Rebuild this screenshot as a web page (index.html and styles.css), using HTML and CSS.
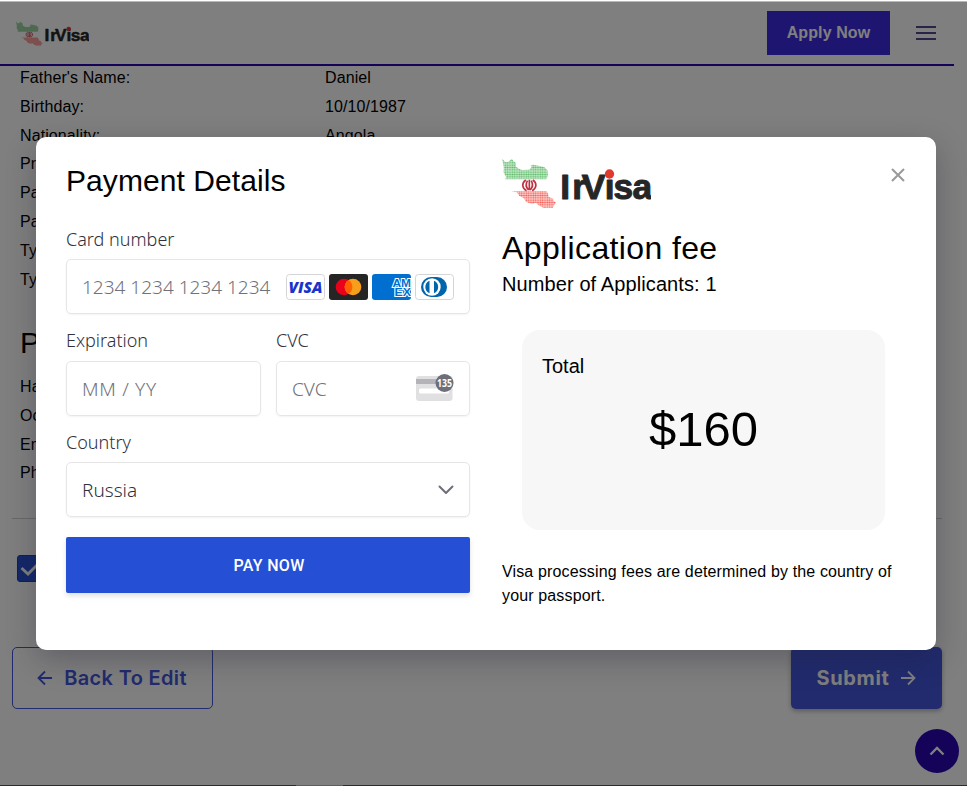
FILE: index.html
```
<!DOCTYPE html>
<html lang="en">
<head>
<meta charset="utf-8">
<title>IrVisa - Payment</title>
<link rel="stylesheet" href="styles.css">
</head>
<body>
<svg width="0" height="0" class="defs" aria-hidden="true">
  <defs>
    <pattern id="green-dots" width="7" height="7" patternUnits="userSpaceOnUse"><rect width="7" height="7" fill="#c5e8c8"/><circle cx="3.500" cy="3.500" r="2.600" fill="#5db868"/></pattern>
    <pattern id="red-dots" width="7" height="7" patternUnits="userSpaceOnUse"><rect width="7" height="7" fill="#ffd0cc"/><circle cx="3.500" cy="3.500" r="2.600" fill="#f4574f"/></pattern>
    <symbol id="logo" viewBox="36 38 446 150">
      <path fill="url(#green-dots)" d="M36 40l9 10 8 0 8-6 4-4 4 7 8 5 0 12 10 6 8 4 22-1 7-7-1-7 8-1 20 5 12 3 9 9 1 15-4 12H45l3-7-8-14 1-14z"/>
      <path fill="url(#red-dots)" d="M63 137h106l5 9 1 8 14 6 1 7 8 5-6 6-4 10-14-1-13 1-16-8-8-8-10 3-12-3-8-3-6-10-14-8-7-10z"/>
      <g fill="none" stroke="#c03242" stroke-width="5"><path d="M107 104c-13 9-12 24 2 32M128 104c13 9 12 24-2 32M112 106c-6 10-5 20 3 28M123 106c6 10 5 20-3 28M117.500 103v32"/></g>
      <text class="logo-text" font-size="106" y="161" x="210 246 275 344 370 427">IrVisa</text>
      <circle cx="358" cy="86" r="14" fill="#e03a2e"/>
    </symbol>
  </defs>
</svg>

<div class="page">
  <header class="topbar">
    <svg class="topbar-logo" role="img" aria-label="IrVisa"><use href="#logo"/></svg>
    <button class="apply">Apply Now</button>
    <div class="burger"><i></i><i></i><i></i></div>
  </header>
  <main>
    <dl class="facts">
      <dt>Father's Name:</dt><dd>Daniel</dd>
      <dt>Birthday:</dt><dd>10/10/1987</dd>
      <dt>Nationality:</dt><dd>Angola</dd>
      <dt>Pr</dt><dd></dd>
      <dt>Pa</dt><dd></dd>
      <dt>Pa</dt><dd></dd>
      <dt>Ty</dt><dd></dd>
      <dt>Ty</dt><dd></dd>
    </dl>
    <h2>P</h2>
    <dl class="facts second">
      <dt>Ha</dt><dd></dd>
      <dt>Oc</dt><dd></dd>
      <dt>Em</dt><dd></dd>
      <dt>Ph</dt><dd></dd>
    </dl>
    <hr>
    <div class="check"><svg viewBox="0 0 26 26" width="26" height="26"><path d="M3.500 12l6.500 6L21 7" fill="none" stroke="#fff" stroke-width="2.800"/></svg></div>
    <div class="actions">
      <button class="back"><svg width="16" height="16" viewBox="0 0 16 16"><path d="M15 8H2M8 1.500L1.500 8 8 14.500"/></svg>Back To Edit</button>
      <button class="submit">Submit<svg width="16" height="16" viewBox="0 0 16 16"><path d="M1 8h13M8 1.500L14.500 8 8 14.500"/></svg></button>
    </div>
  </main>
  <div class="to-top"><svg width="16" height="10" viewBox="0 0 16 10"><path d="M1.500 8.500L8 2l6.500 6.500"/></svg></div>
  <div class="bottom-line"></div>
</div>

<div class="overlay">
  <div class="dialog">
    <section class="pay">
      <h1>Payment Details</h1>
      <label>Card number</label>
      <div class="field number">
        <span class="hint">1234 1234 1234 1234</span>
        <div class="cards">
          <svg viewBox="0 0 39 26"><rect x=".5" y=".5" width="38" height="25" rx="3" fill="#fff" stroke="#d5d5d8"/><text x="2.500" y="18.500" class="visa" textLength="34" lengthAdjust="spacingAndGlyphs">VISA</text></svg>
          <svg viewBox="0 0 39 26"><rect width="39" height="26" rx="3" fill="#252525"/><circle cx="15" cy="13" r="8.300" fill="#eb001b"/><circle cx="24" cy="13" r="8.300" fill="#f79e1b"/><path d="M19.500 6a8.300 8.300 0 0 1 0 14 8.300 8.300 0 0 1 0-14z" fill="#ff5f00"/></svg>
          <svg viewBox="0 0 39 26"><rect width="39" height="26" rx="3" fill="#016fd0"/><g class="amex"><text x="20.500" y="12.500" textLength="18.500" lengthAdjust="spacingAndGlyphs">AM</text><text x="22.500" y="21.500" textLength="16.500" lengthAdjust="spacingAndGlyphs">EX</text></g></svg>
          <svg viewBox="0 0 39 26"><rect x=".5" y=".5" width="38" height="25" rx="3" fill="#fff" stroke="#d5d5d8"/><path d="M16 3h6a10 10 0 0 1 0 20h-6a10 10 0 0 1 0-20z" fill="#0165ac"/><circle cx="17" cy="13" r="8.700" fill="#fff"/><path d="M14.500 6.800a6.700 6.700 0 0 0 0 12.400zM19 6.800a6.700 6.700 0 0 1 0 12.400z" fill="#0165ac"/></svg>
        </div>
      </div>
      <div class="pair">
        <div>
          <label>Expiration</label>
          <div class="field"><span class="hint expiry">MM / YY</span></div>
        </div>
        <div>
          <label>CVC</label>
          <div class="field"><span class="hint">CVC</span>
            <svg class="cvc" width="38" height="28" viewBox="0 0 38 28"><rect y="2" width="36.500" height="25" rx="3" fill="#e0e0e3"/><rect y="5" width="36.500" height="5" fill="#b3b3b8"/><rect x="3" y="14.500" width="30" height="5" rx="1.500" fill="#fff"/><circle cx="28.500" cy="9" r="9" fill="#6d6e78"/><text x="21" y="13" textLength="15" lengthAdjust="spacingAndGlyphs">135</text></svg>
          </div>
        </div>
      </div>
      <label>Country</label>
      <div class="field country"><span>Russia</span><svg width="16" height="10" viewBox="0 0 16 10"><path d="M1.500 1.500L8 8l6.500-6.500" fill="none" stroke="#6d6e78" stroke-width="2" stroke-linecap="round" stroke-linejoin="round"/></svg></div>
      <button class="pay-now">PAY NOW</button>
    </section>
    <section class="fee">
      <svg class="fee-logo" role="img" aria-label="IrVisa"><use href="#logo"/></svg>
      <h1>Application fee</h1>
      <p class="applicants">Number of Applicants: 1</p>
      <div class="total"><span>Total</span><strong>$160</strong></div>
      <p class="note">Visa processing fees are determined by the country of your passport.</p>
    </section>
    <svg class="close" width="14" height="14" viewBox="0 0 14 14"><path d="M1 1l12 12M13 1L1 13" stroke="#999" stroke-width="2" fill="none"/></svg>
  </div>
</div>
</body>
</html>
```
FILE: styles.css
```
* { box-sizing: border-box; }
body {
  margin: 0;
  height: 786px;
  overflow: hidden;
  background: #fff;
  font-family: "Liberation Sans", Arial, sans-serif;
  font-size: 16px;
  color: #000;
}
h1, h2, p, dl, dd { margin: 0; font-weight: 400; }
button { border: 0; padding: 0; font-family: inherit; }
.defs { position: absolute; }
.logo-text { font-family: "Liberation Sans", sans-serif; font-weight: 700; fill: #262626; stroke: #262626; stroke-width: 3; stroke-linejoin: round; }

.page { position: relative; height: 786px; }
.topbar {
  display: flex;
  align-items: center;
  width: 954px;
  height: 66px;
  padding: 0 18px 0 16px;
  border-bottom: 2px solid #2a06b4;
}
.topbar-logo { width: 73px; height: 25px; margin-top: 2px; }
.apply {
  width: 123px;
  height: 44px;
  margin: 2px 26px 0 auto;
  background: #3b2be0;
  color: #fff;
  font-size: 16px;
  font-weight: 700;
  letter-spacing: .1px;
}
.burger { display: grid; gap: 4px; width: 20px; margin-top: 2px; }
.burger i { height: 2px; background: #504890; }

.facts { display: grid; grid-template-columns: 305px 1fr; grid-auto-rows: 28.800px; height: 231px; padding: 0 20px; letter-spacing: .1px; line-height: 24px; }
h2 { padding: 28px 20px 0; font-size: 30px; line-height: 36px; }
.facts.second { height: 136px; padding-top: 14px; }
hr { height: 1px; margin: 21px 25px 0 12px; border: 0; background: #d0d0d0; }
.check { width: 27px; height: 27px; margin: 36px 0 0 17px; border: 1px solid #1e3fb4; border-radius: 3px; background: #264fd2; }
.actions { display: flex; justify-content: space-between; margin: 65px 25px 0 12px; }
.actions button { display: flex; align-items: center; justify-content: center; height: 62px; border-radius: 5px; font: 600 20px Inter, sans-serif; letter-spacing: .35px; }
.actions svg { fill: none; stroke: currentColor; stroke-width: 1.800; }
.actions .back { width: 201px; gap: 11px; padding-right: 1px; border: 1px solid #4356dc; background: none; color: #4356dc; }
.actions .submit { width: 151px; gap: 11px; background: #4356dc; color: #fff; font-weight: 700; letter-spacing: .6px; box-shadow: 0 2px 5px rgba(0,0,0,.3); }
.to-top { position: absolute; right: 8px; bottom: 13px; width: 44px; height: 44px; border-radius: 50%; background: #2a06b4; display: grid; place-items: center; }
.to-top svg { fill: none; stroke: #fff; stroke-width: 2.300; }
.bottom-line { position: absolute; left: 0; right: 0; bottom: 0; height: 1px; background: linear-gradient(90deg, #535b60 296px, #bbb 296px 343px, #535b60 343px); }

.overlay { position: absolute; inset: 0; padding: 137px 31px 136px 36px; background: rgba(0,0,0,.5); }
.overlay::before { content: ""; position: absolute; inset: 0 0 auto; height: 2px; background: linear-gradient(#fff 50%, #b8b8b8 50%); }
.dialog {
  position: relative;
  display: grid;
  grid-template-columns: 404px 1fr;
  column-gap: 32px;
  width: 900px;
  height: 513px;
  padding: 0 36px 0 30px;
  border-radius: 10px;
  background: #fff;
  box-shadow: 0 10px 30px rgba(30,30,50,.3);
}
h1 { font-size: 32px; line-height: 38px; letter-spacing: .37px; }
.pay { padding-top: 25px; font-family: "Noto Sans", sans-serif; color: #30313d; }
.pay h1 { margin-bottom: 26px; font-family: "Liberation Sans", sans-serif; font-size: 30px; letter-spacing: .08px; color: #000; }
label { display: block; height: 33px; font-size: 18px; line-height: 27px; font-weight: 350; }
.field {
  display: flex;
  align-items: center;
  justify-content: space-between;
  height: 55px;
  padding: 1px 15px 0;
  border: 1px solid #e6e6e6;
  border-radius: 5px;
  font-size: 19px;
  font-weight: 350;
  box-shadow: 0 1px 2px rgba(0,0,0,.05);
}
.field.number { padding-top: 0; }
.hint { color: #70717a; white-space: nowrap; }
.expiry { letter-spacing: .7px; }
.cards { display: flex; gap: 4px; }
.cards svg { width: 39px; height: 26px; }
.visa { font: italic 800 15px "Open Sans", sans-serif; fill: #1a34cb; }
.amex text { font: 700 11.500px "Liberation Sans", sans-serif; fill: #016fd0; stroke: #fff; stroke-width: 2; paint-order: stroke; }
.pair { display: grid; grid-template-columns: 195px 194px; gap: 15px; margin: 13px 0; }
.pair label { height: 34px; }
.cvc { margin-bottom: 2px; }
.cvc text { font: 700 11px "Open Sans", sans-serif; fill: #fff; }
.pay-now { display: block; width: 404px; height: 56px; margin-top: 20px; padding-left: 2px; border-radius: 2px; background: #254fd4; color: #fff; font: 500 16px Roboto, sans-serif; letter-spacing: .3px; box-shadow: 0 3px 5px rgba(0,0,0,.12); }

.fee { padding-top: 21px; }
.fee-logo { display: block; width: 149px; height: 50px; }
.fee h1 { margin: 21px 0 0; }
.applicants { font-size: 20px; line-height: 30px; margin-top: 2px; letter-spacing: .1px; }
.total { display: flex; flex-direction: column; width: 363px; height: 200px; margin: 31px 0 30px 20px; padding: 20px; border-radius: 18px; background: #f7f7f7; font-size: 20px; line-height: 32px; }
.total strong { margin-top: 17px; text-align: center; font-size: 49px; line-height: 60px; font-weight: 400; }
.note { line-height: 24px; letter-spacing: .14px; }
.close { position: absolute; right: 31px; top: 31px; }
```
